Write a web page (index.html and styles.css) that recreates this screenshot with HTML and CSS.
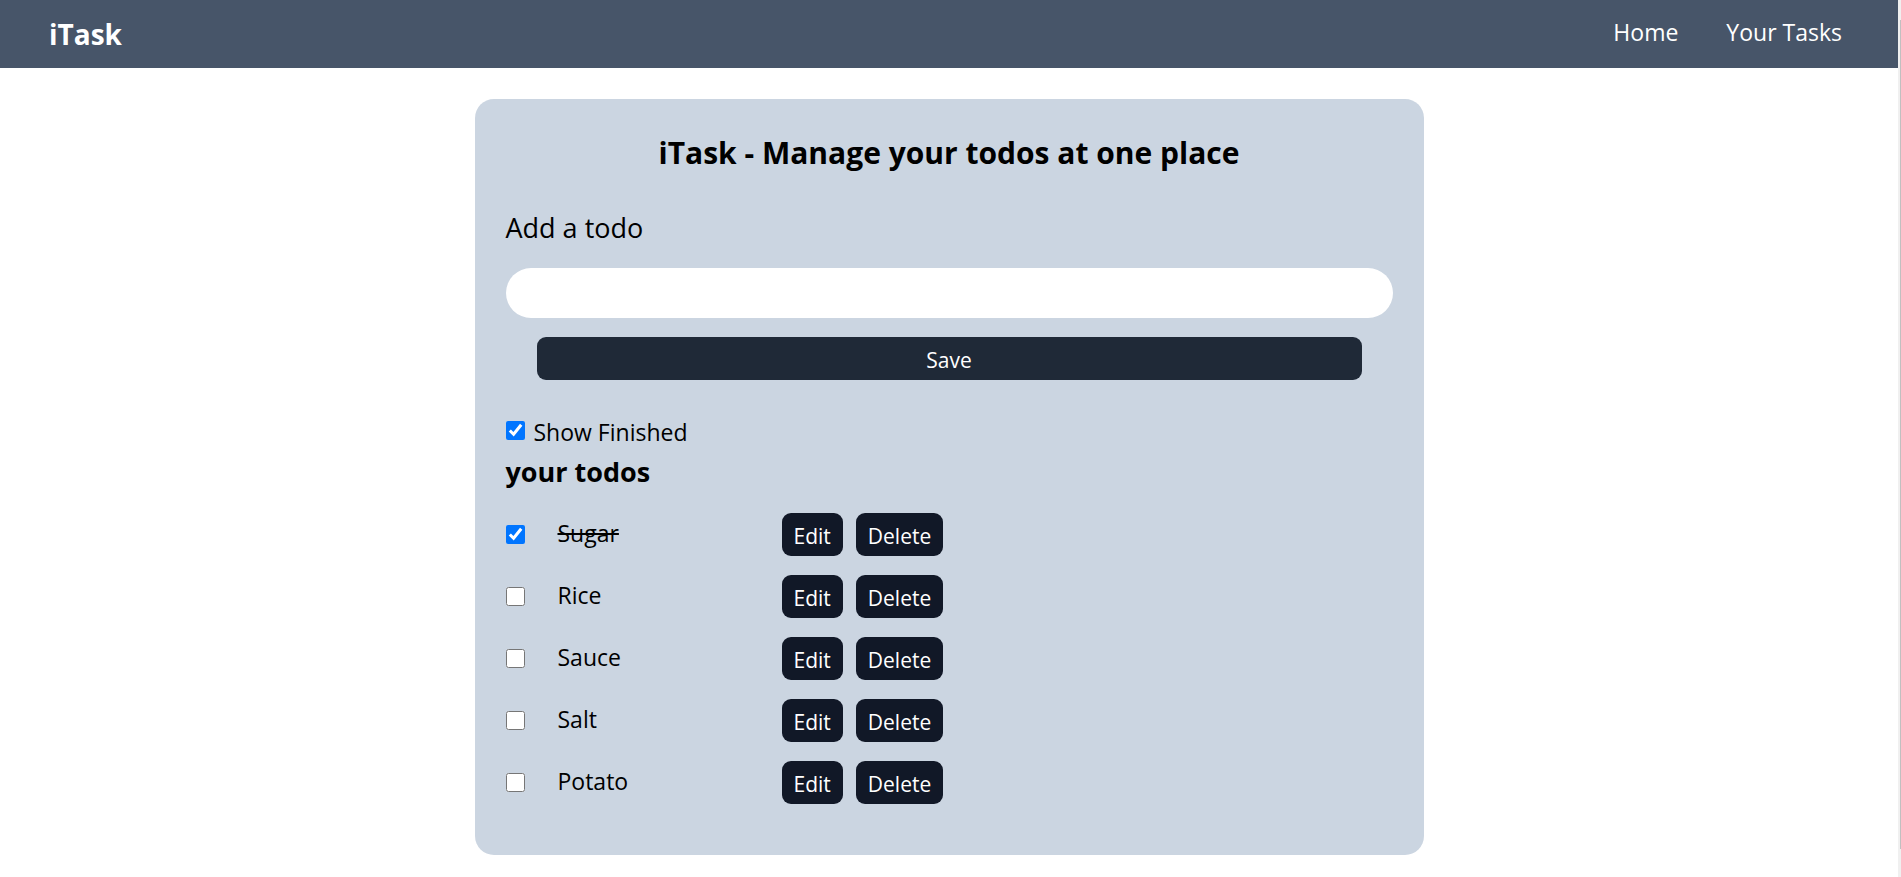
FILE: index.html
```html
<!DOCTYPE html>
<html lang="en">
<head>
<meta charset="utf-8">
<title>iTask</title>
<link rel="stylesheet" href="styles.css">
</head>
<body>
<div class="page">
  <nav class="navbar">
    <span class="brand">iTask</span>
    <ul class="links">
      <li><a href="#">Home</a></li>
      <li><a href="#">Your Tasks</a></li>
    </ul>
  </nav>
  <main class="card">
    <h1 class="title">iTask - Manage your todos at one place</h1>
    <form class="add">
      <label class="add-label" for="todo">Add a todo</label>
      <input class="add-input" id="todo" type="text">
      <button class="save" type="button">Save</button>
    </form>
    <div class="filter">
      <input class="check" id="show" type="checkbox" checked>
      <label for="show">Show Finished</label>
    </div>
    <h2 class="subtitle">your todos</h2>
    <ul class="todos">
      <li class="todo"><input class="check" id="t1" type="checkbox" checked><label class="name done" for="t1">Sugar</label><span class="actions"><button class="btn" type="button">Edit</button><button class="btn" type="button">Delete</button></span></li>
      <li class="todo"><input class="check" id="t2" type="checkbox"><label class="name" for="t2">Rice</label><span class="actions"><button class="btn" type="button">Edit</button><button class="btn" type="button">Delete</button></span></li>
      <li class="todo"><input class="check" id="t3" type="checkbox"><label class="name" for="t3">Sauce</label><span class="actions"><button class="btn" type="button">Edit</button><button class="btn" type="button">Delete</button></span></li>
      <li class="todo"><input class="check" id="t4" type="checkbox"><label class="name" for="t4">Salt</label><span class="actions"><button class="btn" type="button">Edit</button><button class="btn" type="button">Delete</button></span></li>
      <li class="todo"><input class="check" id="t5" type="checkbox"><label class="name" for="t5">Potato</label><span class="actions"><button class="btn" type="button">Edit</button><button class="btn" type="button">Delete</button></span></li>
    </ul>
  </main>
</div>
<div class="scrollbar" aria-hidden="true"><div class="thumb"></div></div>
</body>
</html>
```
FILE: styles.css
```css
* { box-sizing: border-box; margin: 0; padding: 0; }

body {
  display: flex;
  min-height: 100vh;
  background: #fff;
  color: #000;
  font-family: "Open Sans", "Noto Sans", sans-serif;
  font-size: 23px;
  line-height: 36px;
}

ul { list-style: none; }

.page { flex: 1; }

.navbar {
  display: flex;
  justify-content: space-between;
  padding: 14px 56px 14px 49px;
  background: #475569;
  color: #fff;
}

.brand { font-size: 28px; font-weight: 700; line-height: 40px; }

.links { display: flex; gap: 48px; }
.links a { color: inherit; text-decoration: none; }

.card {
  width: 50%;
  margin: 31px auto 0;
  padding: 31px 31px 51px;
  border-radius: 19px;
  background: #cbd5e1;
}

.title { font-size: 30px; font-weight: 700; line-height: 46px; text-align: center; }

.add { display: flex; flex-direction: column; margin-top: 31px; }
.add-label { font-size: 27px; line-height: 42px; }
.add-input {
  height: 50px;
  margin-top: 19px;
  padding: 0 20px;
  border: 0;
  border-radius: 25px;
  background: #fff;
  font: inherit;
}

.save, .btn {
  height: 43px;
  padding: 2px 12px 0;
  border: 0;
  border-radius: 9px;
  background: #111827;
  color: #fff;
  font-family: inherit;
  font-size: 21px;
  line-height: 40px;
}
.save { margin: 19px 31px 0; background: #1f2937; }

.filter { display: flex; gap: 9px; margin-top: 34px; }
.filter .check { margin-top: 7px; }

.check { width: 19px; height: 19px; flex: none; accent-color: #0075ff; }

.subtitle { margin-top: 3px; font-size: 27px; font-weight: 700; line-height: 38px; }

.todos { display: grid; gap: 19px; margin-top: 22px; }
.todo { display: flex; align-items: center; }
.name { width: 224px; margin-left: 33px; padding-bottom: 4px; }
.done { text-decoration: line-through 2px; }
.actions { display: flex; gap: 13px; }

.scrollbar { width: 3px; padding: 20px 0 28px 2px; background: #f0f0f0; display: flex; }
.thumb { flex: 1; background: #c0c0c0; }
```
